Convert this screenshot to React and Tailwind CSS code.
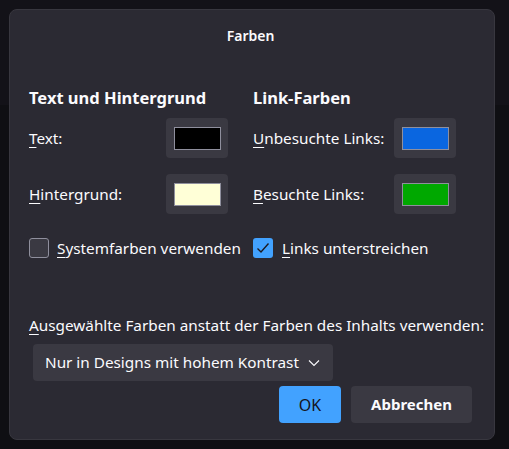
import React from "react";

function Swatch({ color }) {
  return (
    <button className="flex h-[40px] w-[62px] shrink-0 items-center justify-center rounded-[4px] bg-[#3a3942]">
      <span className="block h-[23px] w-[47px] border border-[#8f8f9d]" style={{ backgroundColor: color }} />
    </button>
  );
}

function U({ children }) {
  return <span className="underline underline-offset-[3px] decoration-1">{children}</span>;
}

export default function App() {
  return (
    <div
      className="relative h-[449px] w-[509px] overflow-hidden bg-[#0f0f13] text-[#fbfbfe]"
      style={{ fontFamily: '"Noto Sans", "Open Sans", sans-serif' }}
    >
      {/* window behind the dialog */}
      <div className="absolute left-0 top-0 h-[105px] w-[509px] bg-[#131218]" />
      <div className="absolute left-[9px] top-[9px] flex h-[431px] w-[486px] flex-col rounded-[8px] border border-[#38373f] bg-[#2b2a33] pl-[19px] pr-[22px] pt-[16px]">
        <div className="h-[20px] text-center text-[14px] font-semibold leading-[20px]">Farben</div>

        <div className="mt-[40px] flex">
          <div className="flex w-[199px] flex-col">
            <div className="h-[24px] text-[16.5px] font-bold leading-[24px]">Text und Hintergrund</div>
            <div className="mt-[8px] flex h-[40px] items-center justify-between text-[15.3px]">
              <span><U>T</U>ext:</span>
              <Swatch color="#000000" />
            </div>
            <div className="mt-[16px] flex h-[40px] items-center justify-between text-[15.3px]">
              <span><U>H</U>intergrund:</span>
              <Swatch color="#ffffd7" />
            </div>
            <label className="mt-[22px] flex h-[24px] items-center gap-[8px] text-[15.3px]">
              <span className="block h-[20px] w-[20px] shrink-0 rounded-[3px] border border-[#8f8f9d] bg-[#3a3942]" />
              <span className="whitespace-nowrap"><U>S</U>ystemfarben verwenden</span>
            </label>
          </div>
          <div className="ml-[25px] flex w-[203px] flex-col">
            <div className="h-[24px] text-[16.5px] font-bold leading-[24px]">Link-Farben</div>
            <div className="mt-[8px] flex h-[40px] items-center justify-between text-[15.3px]">
              <span><U>U</U>nbesuchte Links:</span>
              <Swatch color="#0a66e0" />
            </div>
            <div className="mt-[16px] flex h-[40px] items-center justify-between text-[15.3px]">
              <span><U>B</U>esuchte Links:</span>
              <Swatch color="#00a800" />
            </div>
            <label className="mt-[22px] flex h-[24px] items-center gap-[9px] text-[15.3px]">
              <span className="flex h-[20px] w-[20px] shrink-0 items-center justify-center rounded-[3px] bg-[#42a2ff]">
                <svg width="14" height="12" viewBox="0 0 14 12" fill="none">
                  <path d="M1.5 6.5 L5 10 L12.5 1.5" stroke="#1b1a22" strokeWidth="1.4" />
                </svg>
              </span>
              <span className="whitespace-nowrap"><U>L</U>inks unterstreichen</span>
            </label>
          </div>
        </div>

        <div className="mt-[54px] h-[22px] whitespace-nowrap text-[15.3px] leading-[22px]">
          <U>A</U>usgewählte Farben anstatt der Farben des Inhalts verwenden:
        </div>
        <button className="ml-[4px] mt-[8px] flex h-[37px] w-[300px] items-center gap-[9px] rounded-[4px] bg-[#3a3942] pl-[12px] text-[15.3px]">
          <span className="whitespace-nowrap">Nur in Designs mit hohem Kontrast</span>
          <svg width="12" height="8" viewBox="0 0 12 8" fill="none">
            <path d="M1 1.5 L6 6.5 L11 1.5" stroke="#fbfbfe" strokeWidth="1.1" />
          </svg>
        </button>
        <div className="mt-[5px] flex justify-end gap-[10px]">
          <button className="h-[37px] w-[62px] rounded-[4px] bg-[#42a2ff] text-[16px] text-[#15141a]">OK</button>
          <button className="h-[37px] w-[121px] rounded-[4px] bg-[#3a3942] text-[15px] font-bold">Abbrechen</button>
        </div>
      </div>
    </div>
  );
}
